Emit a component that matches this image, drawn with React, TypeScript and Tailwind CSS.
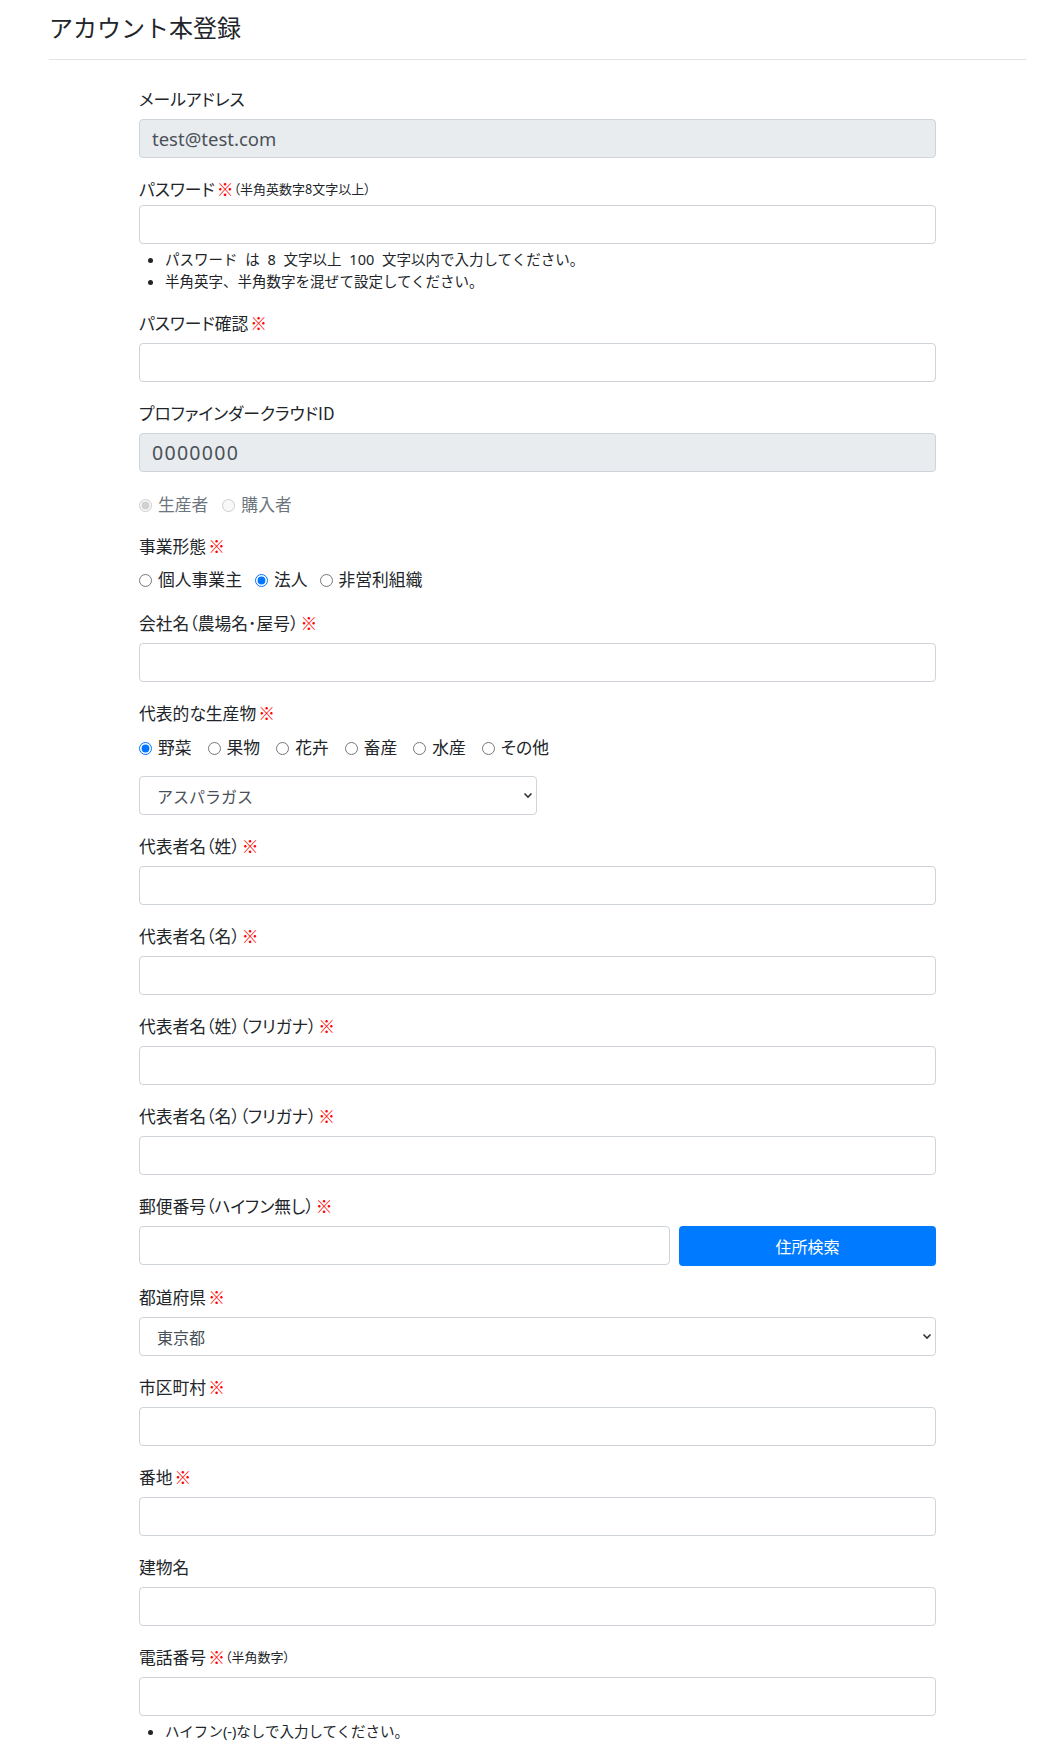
import { ReactNode } from "react";

const jp = "font-['Noto_Sans_CJK_JP',sans-serif]";
const palt = "[font-feature-settings:'palt']";

function Req() {
  return <span className="ml-[2px] text-[#ff0000]">※</span>;
}

function Label({ children, tight }: { children: ReactNode; tight?: boolean }) {
  return (
    <div
      className={
        "h-6 text-[16.8px] leading-6 text-[#212529] " +
        (tight ? "mb-[4px] " : "mb-2 ") +
        palt
      }
    >
      {children}
    </div>
  );
}

function TextInput({
  value,
  readOnly,
  className,
}: {
  value?: string;
  readOnly?: boolean;
  className?: string;
}) {
  return (
    <input
      type="text"
      defaultValue={value}
      readOnly={readOnly}
      className={
        "block h-[39px] w-full rounded-[4px] border border-[#ced4da] px-3 font-['Noto_Sans',sans-serif] text-[#495057] outline-none " +
        (readOnly ? "bg-[#e9ecef] " : "bg-white ") +
        (className ?? "text-[18.5px]")
      }
    />
  );
}

function Select({ value, className }: { value: string; className?: string }) {
  return (
    <div className={"relative " + (className ?? "")}>
      <select
        defaultValue={value}
        className="block h-[39px] w-full appearance-none rounded-[4px] border border-[#ced4da] bg-white pl-[17px] pr-8 text-[16px] text-[#495057] outline-none"
      >
        <option value={value}>{value}</option>
      </select>
      <svg
        className="pointer-events-none absolute right-[4px] top-[16px]"
        width="10"
        height="7"
        viewBox="0 0 10 7"
        fill="none"
      >
        <path d="M1.5 1.5L5 5L8.5 1.5" stroke="#333" strokeWidth="1.6" />
      </svg>
    </div>
  );
}

function Radio({
  label,
  checked,
  disabled,
  name,
  className,
}: {
  label: string;
  checked?: boolean;
  disabled?: boolean;
  name: string;
  className?: string;
}) {
  return (
    <label
      className={
        "inline-flex items-center " +
        (disabled ? "text-[#6c757d] " : "text-[#212529] ") +
        (className ?? "")
      }
    >
      <input
        type="radio"
        name={name}
        defaultChecked={checked}
        disabled={disabled}
        className="m-0 mr-[6px] h-[13px] w-[13px]"
      />
      {label}
    </label>
  );
}

function Field({
  label,
  children,
}: {
  label: ReactNode;
  children: ReactNode;
}) {
  return (
    <div className="mb-[19px]">
      <Label>{label}</Label>
      {children}
    </div>
  );
}

// help text under an input
function Notes({ children }: { children: ReactNode }) {
  return (
    <ul className="mt-[4px] list-disc pl-[26px] font-['Noto_Sans','Noto_Sans_CJK_JP',sans-serif] text-[14.5px] leading-[22px]">
      {children}
    </ul>
  );
}

export default function App() {
  return (
    <div className={"min-h-[1760px] bg-white pl-[49px] pr-[32px] text-[#212529] " + jp}>
      <div className="border-b border-[#e3e3e3] pb-[18px] pt-[12px]">
        <h1 className="text-[24px] font-normal leading-[29px]">アカウント本登録</h1>
      </div>

      <div className="mx-auto w-[797px] pt-[27px]">
        <Field label="メールアドレス">
          <TextInput value="test@test.com" readOnly />
        </Field>

        <div className="mb-[19px]">
          <Label tight>
            パスワード<Req />
            <span className="align-top text-[13px] leading-6">（半角英数字8文字以上）</span>
          </Label>
          <TextInput />
          <Notes>
            <li className="[word-spacing:4px]">
              パスワード は 8 文字以上 100 文字以内で入力してください。
            </li>
            <li>半角英字、半角数字を混ぜて設定してください。</li>
          </Notes>
        </div>

        <Field label={<>パスワード確認<Req /></>}>
          <TextInput />
        </Field>

        <Field label="プロファインダークラウドID">
          <TextInput value="0000000" readOnly className="text-[19.5px] tracking-[1.3px]" />
        </Field>

        <div className={"mb-[17px] mt-[21px] flex h-6 items-center text-[16.8px] " + palt}>
          <Radio name="role" label="生産者" checked disabled className="mr-[14px]" />
          <Radio name="role" label="購入者" disabled />
        </div>

        <Label>
          事業形態<Req />
        </Label>
        <div className={"mb-[19px] mt-[10px] flex h-6 items-center text-[16.8px] " + palt}>
          <Radio name="biz" label="個人事業主" className="mr-[13px]" />
          <Radio name="biz" label="法人" checked className="mr-[12px]" />
          <Radio name="biz" label="非営利組織" />
        </div>

        <Field label={<>会社名（農場名･屋号）<Req /></>}>
          <TextInput />
        </Field>

        <Label>
          代表的な生産物<Req />
        </Label>
        <div className={"mb-[16px] mt-[11px] flex h-6 items-center text-[16.8px] " + palt}>
          <Radio name="prod" label="野菜" checked className="mr-[16px]" />
          <Radio name="prod" label="果物" className="mr-[16px]" />
          <Radio name="prod" label="花卉" className="mr-[16px]" />
          <Radio name="prod" label="畜産" className="mr-[16px]" />
          <Radio name="prod" label="水産" className="mr-[16px]" />
          <Radio name="prod" label="その他" />
        </div>
        <Select value="アスパラガス" className="mb-[19px] w-[398px]" />

        <Field label={<>代表者名（姓）<Req /></>}>
          <TextInput />
        </Field>
        <Field label={<>代表者名（名）<Req /></>}>
          <TextInput />
        </Field>
        <Field label={<>代表者名（姓）（フリガナ）<Req /></>}>
          <TextInput />
        </Field>
        <Field label={<>代表者名（名）（フリガナ）<Req /></>}>
          <TextInput />
        </Field>

        <Field label={<>郵便番号（ハイフン無し）<Req /></>}>
          <div className="flex gap-[9px]">
            <div className="w-[531px]">
              <TextInput />
            </div>
            <button className="h-[40px] flex-1 rounded-[4px] bg-[#007bff] text-[16px] text-white">
              住所検索
            </button>
          </div>
        </Field>

        <Field label={<>都道府県<Req /></>}>
          <Select value="東京都" />
        </Field>

        <Field label={<>市区町村<Req /></>}>
          <TextInput />
        </Field>
        <Field label={<>番地<Req /></>}>
          <TextInput />
        </Field>
        <Field label="建物名">
          <TextInput />
        </Field>

        <div className="mb-[19px]">
          <Label>
            電話番号<Req />
            <span className="align-top text-[13px] leading-6">（半角数字）</span>
          </Label>
          <TextInput />
          <Notes>
            <li>ハイフン(-)なしで入力してください。</li>
          </Notes>
        </div>
      </div>
    </div>
  );
}
